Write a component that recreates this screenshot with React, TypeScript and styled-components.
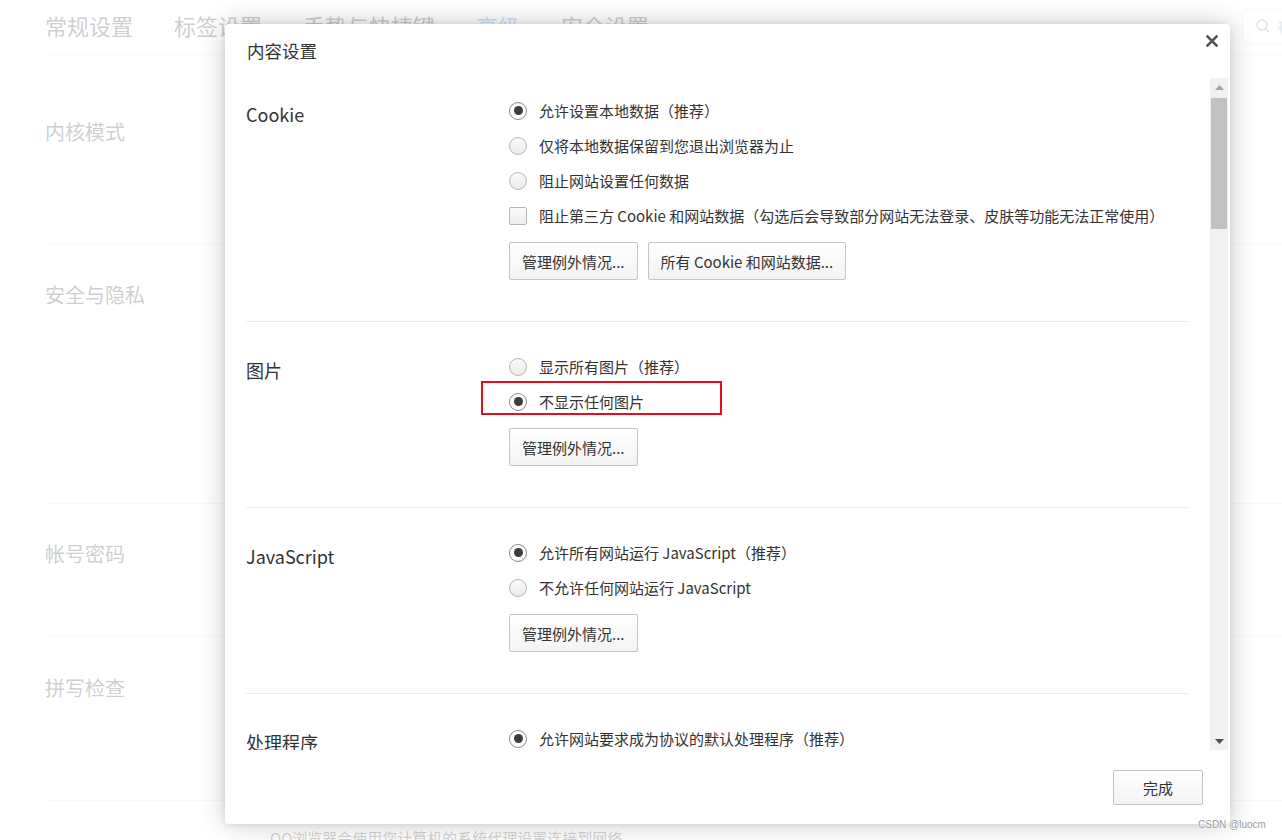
import styled, { createGlobalStyle } from "styled-components";

const FONT = `"Noto Sans CJK SC", "Microsoft YaHei", sans-serif`;

const GlobalStyle = createGlobalStyle`
  html, body {
    margin: 0;
    padding: 0;
    background: #ffffff;
    font-family: ${FONT};
    overflow: hidden;
  }
  * { box-sizing: border-box; }
`;

/* ---------- settings page behind the dialog ---------- */

const Page = styled.div`
  position: relative;
  width: 1282px;
  height: 840px;
  overflow: hidden;
  background: #fff;
`;

const TopBar = styled.div`
  display: flex;
  align-items: center;
  height: 55px;
  margin-left: 45px;
  margin-right: -160px;
  border-bottom: 1px solid #e4e4e4;
  gap: 41px;
`;

const Tab = styled.div<{ $active?: boolean }>`
  font-size: 22px;
  color: ${(p) => (p.$active ? "#2d7cf0" : "#333")};
  line-height: 30px;
  padding-bottom: 4px;
`;

const Search = styled.div`
  margin-left: auto;
  width: 200px;
  height: 35px;
  margin-top: -2px;
  border: 1px solid #ddd;
  border-radius: 4px;
  display: flex;
  align-items: center;
  gap: 6px;
  padding-left: 12px;
  font-size: 16px;
  color: #999;
`;

const Block = styled.div<{ $h: number; $pt: number }>`
  display: flex;
  height: ${(p) => p.$h}px;
  padding-top: ${(p) => p.$pt}px;
  margin-left: 45px;
  border-bottom: 1px solid #e4e4e4;
`;

const BlockLabel = styled.div`
  width: 225px;
  font-size: 20px;
  line-height: 26px;
  color: #333;
`;

const BlockText = styled.div`
  font-size: 15px;
  line-height: 20px;
  color: #444;
  padding-top: 27px;
`;

const Veil = styled.div`
  position: absolute;
  inset: 0;
  background: rgba(255, 255, 255, 0.76);
`;

/* ---------- dialog ---------- */

const Dialog = styled.div`
  position: absolute;
  left: 225px;
  top: 24px;
  width: 1005px;
  height: 800px;
  background: #fff;
  border-radius: 4px;
  box-shadow: 0 0 28px rgba(0, 0, 0, 0.22), 0 0 6px rgba(0, 0, 0, 0.08);
  display: flex;
  flex-direction: column;
  color: #333;
`;

const Header = styled.div`
  height: 54px;
  flex-shrink: 0;
  display: flex;
  align-items: center;
  justify-content: space-between;
  padding: 0 8px 0 22px;
`;

const Title = styled.div`
  font-size: 17.5px;
  color: #333;
  padding-bottom: 2px;
`;

const Close = styled.div`
  width: 20px;
  height: 20px;
  display: flex;
  align-items: center;
  justify-content: center;
  margin-top: -20px;
`;

const BodyWrap = styled.div`
  display: flex;
  height: 672px;
  flex-shrink: 0;
`;

const Body = styled.div`
  flex: 1;
  overflow: hidden;
  padding: 0 22px 0 21px;
`;

const Section = styled.div<{ $first?: boolean }>`
  display: flex;
  padding-top: ${(p) => (p.$first ? 15 : 27)}px;
  padding-bottom: 41px;
  & + & {
    border-top: 1px solid #ececec;
  }
`;

const Label = styled.div`
  width: 263px;
  flex-shrink: 0;
  font-size: 18px;
  line-height: 35px;
  padding-top: 4px;
  color: #333;
`;

const Options = styled.div`
  display: flex;
  flex-direction: column;
`;

const Row = styled.div`
  position: relative;
  display: flex;
  align-items: center;
  height: 35px;
  gap: 12px;
  font-size: 15px;
  color: #333;
  white-space: nowrap;
`;

const Radio = styled.span<{ $checked?: boolean }>`
  width: 18px;
  height: 18px;
  border-radius: 50%;
  border: 1px solid ${(p) => (p.$checked ? "#8a8a8a" : "#b5b5b5")};
  background: ${(p) =>
    p.$checked ? "#fff" : "linear-gradient(#fafafa, #eaeaea)"};
  display: flex;
  align-items: center;
  justify-content: center;
  flex-shrink: 0;
  &::after {
    content: "";
    display: ${(p) => (p.$checked ? "block" : "none")};
    width: 9px;
    height: 9px;
    border-radius: 50%;
    background: #3c3c3c;
  }
`;

const Check = styled.span`
  width: 18px;
  height: 18px;
  border-radius: 2px;
  border: 1px solid #b5b5b5;
  background: linear-gradient(#fafafa, #eeeeee);
  flex-shrink: 0;
`;

const Buttons = styled.div`
  display: flex;
  gap: 10px;
  margin-top: 9px;
`;

const Button = styled.button`
  height: 38px;
  padding: 0 12px;
  border: 1px solid #c4c4c4;
  border-radius: 2px;
  background: linear-gradient(#ffffff, #f3f3f3);
  font-family: ${FONT};
  font-size: 15px;
  color: #333;
  cursor: pointer;
`;

const Mark = styled.div`
  position: absolute;
  left: -28px;
  top: -3px;
  width: 241px;
  height: 34px;
  border: 2px solid #e3101c;
  pointer-events: none;
`;

const Scrollbar = styled.div`
  width: 18px;
  margin-right: 2px;
  background: #f1f1f1;
  display: flex;
  flex-direction: column;
  align-items: center;
`;

const Arrow = styled.div`
  height: 18px;
  width: 100%;
  display: flex;
  align-items: center;
  justify-content: center;
`;

const Thumb = styled.div`
  width: 16px;
  height: 131px;
  margin-top: 2px;
  background: #c1c1c1;
`;

const Spacer = styled.div`
  flex: 1;
`;

const Footer = styled.div`
  flex: 1;
  display: flex;
  justify-content: flex-end;
  padding: 20px 27px 0 0;
`;

const Done = styled(Button)`
  width: 90px;
  height: 35px;
`;

const Watermark = styled.div`
  position: absolute;
  left: 1198px;
  top: 819px;
  font-family: "Liberation Sans", Arial, sans-serif;
  font-size: 10px;
  color: #9a9a9a;
  text-shadow: 0 0 2px #fff, 0 0 1px #fff;
`;

type Opt = { text: string; kind?: "radio" | "check"; checked?: boolean; mark?: boolean };
type Sec = { label: string; options: Opt[]; buttons: string[] };

const sections: Sec[] = [
  {
    label: "Cookie",
    options: [
      { text: "允许设置本地数据（推荐）", checked: true },
      { text: "仅将本地数据保留到您退出浏览器为止" },
      { text: "阻止网站设置任何数据" },
      {
        text: "阻止第三方 Cookie 和网站数据（勾选后会导致部分网站无法登录、皮肤等功能无法正常使用）",
        kind: "check",
      },
    ],
    buttons: ["管理例外情况...", "所有 Cookie 和网站数据..."],
  },
  {
    label: "图片",
    options: [
      { text: "显示所有图片（推荐）" },
      { text: "不显示任何图片", checked: true, mark: true },
    ],
    buttons: ["管理例外情况..."],
  },
  {
    label: "JavaScript",
    options: [
      { text: "允许所有网站运行 JavaScript（推荐）", checked: true },
      { text: "不允许任何网站运行 JavaScript" },
    ],
    buttons: ["管理例外情况..."],
  },
  {
    label: "处理程序",
    options: [
      { text: "允许网站要求成为协议的默认处理程序（推荐）", checked: true },
      { text: "不允许任何网站处理协议" },
    ],
    buttons: ["管理处理程序..."],
  },
];

function App() {
  return (
    <>
      <GlobalStyle />
      <Page>
        <TopBar>
          <Tab>常规设置</Tab>
          <Tab>标签设置</Tab>
          <Tab>手势与快捷键</Tab>
          <Tab $active>高级</Tab>
          <Tab>安全设置</Tab>
          <Search>
            <svg width="16" height="16" viewBox="0 0 16 16" fill="none" stroke="#888" strokeWidth="1.4">
              <circle cx="7" cy="7" r="5" />
              <path d="M10.6 10.6 L14 14" />
            </svg>
            在设置中搜索
          </Search>
        </TopBar>
        <Block $h={189} $pt={64}>
          <BlockLabel>内核模式</BlockLabel>
        </Block>
        <Block $h={260} $pt={38}>
          <BlockLabel>安全与隐私</BlockLabel>
        </Block>
        <Block $h={133} $pt={37}>
          <BlockLabel>帐号密码</BlockLabel>
        </Block>
        <Block $h={164} $pt={38}>
          <BlockLabel>拼写检查</BlockLabel>
        </Block>
        <Block $h={120} $pt={0}>
          <BlockLabel />
          <BlockText>QQ浏览器会使用您计算机的系统代理设置连接到网络。</BlockText>
        </Block>
        <Veil />

        <Dialog>
          <Header>
            <Title>内容设置</Title>
            <Close>
              <svg width="12" height="12" viewBox="0 0 12 12">
                <path d="M1.5 1.5 L10.5 10.5 M10.5 1.5 L1.5 10.5" stroke="#555" strokeWidth="2.6" strokeLinecap="square" />
              </svg>
            </Close>
          </Header>
          <BodyWrap>
            <Body>
              {sections.map((s, i) => (
                <Section key={s.label} $first={i === 0}>
                  <Label>{s.label}</Label>
                  <Options>
                    {s.options.map((o) => (
                      <Row key={o.text}>
                        {o.kind === "check" ? <Check /> : <Radio $checked={o.checked} />}
                        {o.text}
                        {o.mark && <Mark />}
                      </Row>
                    ))}
                    <Buttons>
                      {s.buttons.map((b) => (
                        <Button key={b}>{b}</Button>
                      ))}
                    </Buttons>
                  </Options>
                </Section>
              ))}
            </Body>
            <Scrollbar>
              <Arrow>
                <svg width="9" height="5" viewBox="0 0 9 5">
                  <path d="M0 5 L4.5 0 L9 5 Z" fill="#a3a3a3" />
                </svg>
              </Arrow>
              <Thumb />
              <Spacer />
              <Arrow>
                <svg width="9" height="5" viewBox="0 0 9 5">
                  <path d="M0 0 L9 0 L4.5 5 Z" fill="#505050" />
                </svg>
              </Arrow>
            </Scrollbar>
          </BodyWrap>
          <Footer>
            <Done>完成</Done>
          </Footer>
        </Dialog>
        <Watermark>CSDN @luocm</Watermark>
      </Page>
    </>
  );
}

export default App;
